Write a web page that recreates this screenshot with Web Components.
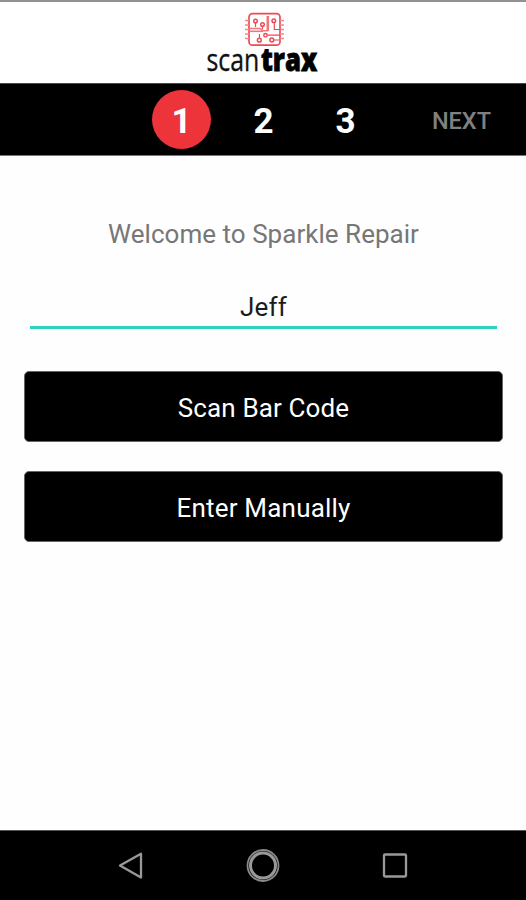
<!DOCTYPE html>
<html lang="en">
<head>
<meta charset="utf-8">
<title>scantrax</title>
<style>
  html, body {
    height: 100%;
    margin: 0;
  }
  body {
    background: #fff;
    font-family: Roboto, "Liberation Sans", sans-serif;
    overflow: hidden;
  }
</style>
</head>
<body>
<scan-app>
  <scan-logo slot="header"></scan-logo>
  <step-bar slot="header" current="1" steps="3">NEXT</step-bar>
  <welcome-text>Welcome to Sparkle Repair</welcome-text>
  <name-field>Jeff</name-field>
  <action-button style="--spacing: 0.12px">Scan Bar Code</action-button>
  <action-button>Enter Manually</action-button>
  <android-nav slot="footer"></android-nav>
</scan-app>

<script>
class BaseElement extends HTMLElement {
  constructor() {
    super();
    this.attachShadow({ mode: "open" });
    const template = document.createElement("template");
    template.innerHTML = this.constructor.markup;
    this.shadowRoot.appendChild(template.content.cloneNode(true));
  }
}

class ScanApp extends BaseElement {
  static get markup() {
    return `
      <style>
        :host {
          display: flex;
          flex-direction: column;
          height: 900px;
          width: 526px;
          background: #fefefe;
        }
        main {
          flex: 1;
          display: flex;
          flex-direction: column;
          padding: 60px 23px 0 24px;
        }
      </style>
      <slot name="header"></slot>
      <main><slot></slot></main>
      <slot name="footer"></slot>
    `;
  }
}

class ScanLogo extends BaseElement {
  static get markup() {
    return `
      <style>
        :host {
          display: flex;
          justify-content: center;
          box-sizing: border-box;
          height: 83px;
          border-top: 2px solid #919191;
          background: #fff;
        }
        svg { display: block; overflow: visible; }
        text { font-family: "Open Sans", sans-serif; }
      </style>
      <svg width="126" height="81" viewBox="200 2 126 81">
        <g fill="none" stroke="#ee4a52" stroke-width="1.7">
          <rect x="249" y="13.6" width="31" height="31.6" rx="3.5"/>
          <g stroke="#f4898e" stroke-width="1.6">
            <path d="M245 20.5h4M245 25h4M245 29.5h4M245 34h4M245 38.5h4"/>
            <path d="M280 20.5h4M280 25h4M280 29.5h4M280 34h4M280 38.5h4"/>
          </g>
          <path d="M249 28.5h11l3 2.2h5" stroke="#f0767c" stroke-width="1.5"/>
          <path d="M249 31.3h14" stroke="#f0767c" stroke-width="1.6"/>
          <path d="M267.8 16v15" stroke="#f0767c" stroke-width="2.6"/>
          <path d="M255.5 23v4M262.5 26.5v2.5M274.3 23v6.5h6M267.5 35.2h12.5M259.5 34v4M274 40h5" stroke-width="1.2"/>
          <g stroke-width="1.5">
            <circle cx="255.5" cy="21" r="1.8"/>
            <circle cx="262.5" cy="24.5" r="1.8"/>
            <circle cx="273.8" cy="20.8" r="1.8"/>
            <circle cx="265.5" cy="35.3" r="1.7"/>
            <circle cx="259.3" cy="40.2" r="1.9"/>
            <circle cx="271.8" cy="40" r="1.9"/>
          </g>
        </g>
        <text transform="translate(206.5 71) scale(.8 1)" font-size="31" fill="#111" stroke="#111" stroke-width=".35">scan</text>
        <text transform="translate(261 71) scale(.83 1)" font-size="31" font-weight="800" fill="#000" stroke="#000" stroke-width=".8">trax</text>
      </svg>
    `;
  }
}

class StepBar extends BaseElement {
  static get markup() {
    return `
      <style>
        :host {
          display: flex;
          align-items: center;
          justify-content: space-between;
          box-sizing: border-box;
          height: 73px;
          padding: 0 35px 0 152px;
          border-top: 1px solid #4a4a4a;
          border-bottom: 1px solid #777;
          background: #000;
          color: #fff;
        }
        .steps {
          display: flex;
          gap: 23px;
        }
        .step {
          display: flex;
          align-items: center;
          justify-content: center;
          box-sizing: border-box;
          width: 59px;
          height: 59px;
          padding-top: 3px;
          border-radius: 50%;
          font-size: 35px;
          font-weight: 700;
        }
        .step.current { background: #ee343b; }
        .next {
          padding-top: 2px;
          color: #808080;
          font-size: 23.5px;
          font-weight: 500;
        }
      </style>
      <div class="steps"></div>
      <span class="next"><slot></slot></span>
    `;
  }

  connectedCallback() {
    const steps = this.shadowRoot.querySelector(".steps");
    steps.textContent = "";
    for (let i = 1; i <= Number(this.getAttribute("steps")); i++) {
      const step = document.createElement("span");
      step.className = "step";
      step.classList.toggle("current", i === Number(this.getAttribute("current")));
      step.textContent = i;
      steps.appendChild(step);
    }
  }
}

class WelcomeText extends BaseElement {
  static get markup() {
    return `
      <style>
        :host {
          display: block;
          height: 36px;
          line-height: 36px;
          text-align: center;
          font-size: 26px;
          letter-spacing: 0.03px;
          color: #777;
        }
      </style>
      <slot></slot>
    `;
  }
}

class NameField extends BaseElement {
  static get markup() {
    return `
      <style>
        :host {
          display: block;
          margin: 37px 6px 0;
          height: 37px;
          line-height: 36px;
          border-bottom: 3px solid #2fd3bd;
          text-align: center;
          font-size: 26px;
          letter-spacing: 0.2px;
          color: #1c1c1c;
        }
      </style>
      <slot></slot>
    `;
  }
}

class ActionButton extends BaseElement {
  static get markup() {
    return `
      <style>
        :host {
          display: block;
          margin-top: 29px;
        }
        :host(:first-of-type) { margin-top: 42px; }
        button {
          display: block;
          width: 100%;
          height: 71px;
          padding: 3px 0 0;
          border: 1px solid #666;
          border-radius: 5px;
          background: #000;
          color: #fff;
          font: 400 26px Roboto, "Liberation Sans", sans-serif;
          letter-spacing: var(--spacing, 0.2px);
        }
      </style>
      <button type="button"><slot></slot></button>
    `;
  }
}

class AndroidNav extends BaseElement {
  static get markup() {
    return `
      <style>
        :host {
          display: flex;
          align-items: center;
          justify-content: space-between;
          box-sizing: border-box;
          height: 70px;
          padding: 0 113px 0 112px;
          border-top: 1px solid #555;
          background: #000;
        }
        svg {
          width: 36px;
          height: 36px;
          fill: none;
          stroke: #999;
          stroke-width: 2.3;
        }
      </style>
      <svg viewBox="0 0 36 36"><path d="M8 17.5 29 5.8v23.8z" stroke-linejoin="round"/></svg>
      <svg viewBox="0 0 36 36">
        <circle cx="18" cy="17.5" r="15.5" stroke="#8a8a8a" stroke-width="1.8"/>
        <circle cx="18" cy="17.5" r="12.5" stroke-width="3"/>
      </svg>
      <svg viewBox="0 0 36 36"><rect x="7" y="6.5" width="22" height="22" rx="1"/></svg>
    `;
  }
}

customElements.define("scan-app", ScanApp);
customElements.define("scan-logo", ScanLogo);
customElements.define("step-bar", StepBar);
customElements.define("welcome-text", WelcomeText);
customElements.define("name-field", NameField);
customElements.define("action-button", ActionButton);
customElements.define("android-nav", AndroidNav);
</script>
</body>
</html>
